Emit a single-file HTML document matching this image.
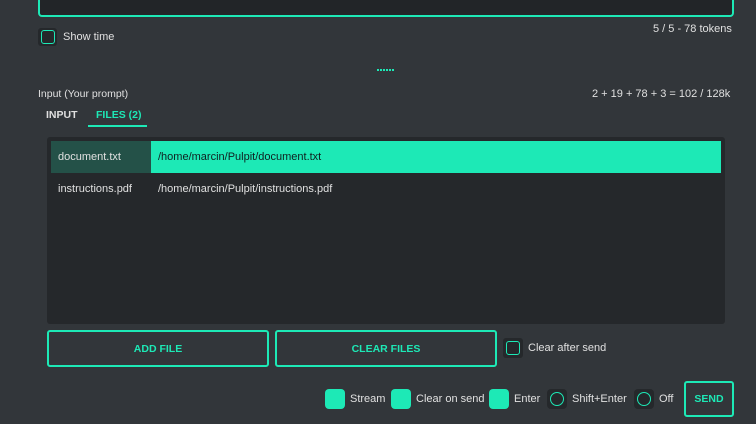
<!DOCTYPE html>
<html><head><style>
body{margin:0;width:756px;height:424px;background:#32363a;font-family:"Liberation Sans",sans-serif;color:#e0e0e0;position:relative;overflow:hidden;font-size:11px}
.a{position:absolute}
.cb{position:absolute;width:14px;height:14px;border:1.5px solid #1de9b6;border-radius:3px;background:#25282b;box-sizing:border-box}
.fill{position:absolute;width:20px;height:20px;background:#1de9b6;border-radius:4px}
.rad{position:absolute;width:20px;height:20px;background:#25282b;border-radius:4px}
.rad:after{content:"";position:absolute;left:3px;top:3px;width:14px;height:14px;border:1.5px solid #1de9b6;border-radius:50%;box-sizing:border-box}
.btn{position:absolute;border:2px solid #1de9b6;border-radius:3px;box-sizing:border-box;color:#1de9b6;font-weight:bold;font-size:10.5px;display:flex;align-items:center;justify-content:center}
.dot{position:absolute;top:69px;width:2px;height:2px;background:#1de9b6}
</style></head><body>
<div class="a" style="left:38px;top:-10px;width:696px;height:27px;border:2px solid #1de9b6;border-radius:4px;background:#222528;box-sizing:border-box"></div>
<div class="a" style="left:38px;top:28px;width:19px;height:18px;background:#25282b;border-radius:3px"></div>
<div class="cb" style="left:41px;top:30px"></div>
<div class="a" style="left:63px;top:31px">Show time</div>
<div class="a" style="left:653px;top:23px">5 / 5 - 78 tokens</div>
<div class="dot" style="left:377px"></div><div class="dot" style="left:380px"></div><div class="dot" style="left:383px"></div><div class="dot" style="left:386px"></div><div class="dot" style="left:389px"></div><div class="dot" style="left:392px"></div>
<div class="a" style="left:38px;top:88px;font-size:10.5px">Input (Your prompt)</div>
<div class="a" style="left:592px;top:88px">2 + 19 + 78 + 3 = 102 / 128k</div>
<div class="a" style="left:46px;top:109px;font-weight:bold;font-size:10.5px">INPUT</div>
<div class="a" style="left:96px;top:109px;font-weight:bold;font-size:10.5px;color:#1de9b6">FILES (2)</div>
<div class="a" style="left:88px;top:125px;width:59px;height:2px;background:#1de9b6"></div>
<div class="a" style="left:47px;top:137px;width:678px;height:187px;background:#25282b;border-radius:3px"></div>
<div class="a" style="left:51px;top:141px;width:100px;height:32px;background:#245148"></div>
<div class="a" style="left:151px;top:141px;width:570px;height:32px;background:#1de9b6"></div>
<div class="a" style="left:58px;top:151px">document.txt</div>
<div class="a" style="left:158px;top:151px;color:#102020">/home/marcin/Pulpit/document.txt</div>
<div class="a" style="left:58px;top:183px">instructions.pdf</div>
<div class="a" style="left:158px;top:183px">/home/marcin/Pulpit/instructions.pdf</div>
<div class="btn" style="left:47px;top:330px;width:222px;height:37px">ADD FILE</div>
<div class="btn" style="left:275px;top:330px;width:222px;height:37px">CLEAR FILES</div>
<div class="a" style="left:503px;top:338px;width:20px;height:20px;background:#25282b;border-radius:3px"></div>
<div class="cb" style="left:506px;top:341px"></div>
<div class="a" style="left:528px;top:342px">Clear after send</div>
<div class="fill" style="left:325px;top:389px"></div><div class="a" style="left:350px;top:393px">Stream</div>
<div class="fill" style="left:391px;top:389px"></div><div class="a" style="left:416px;top:393px">Clear on send</div>
<div class="fill" style="left:489px;top:389px"></div><div class="a" style="left:514px;top:393px">Enter</div>
<div class="rad" style="left:547px;top:389px"></div><div class="a" style="left:572px;top:393px">Shift+Enter</div>
<div class="rad" style="left:634px;top:389px"></div><div class="a" style="left:659px;top:393px">Off</div>
<div class="btn" style="left:684px;top:381px;width:50px;height:36px">SEND</div>
</body></html>
